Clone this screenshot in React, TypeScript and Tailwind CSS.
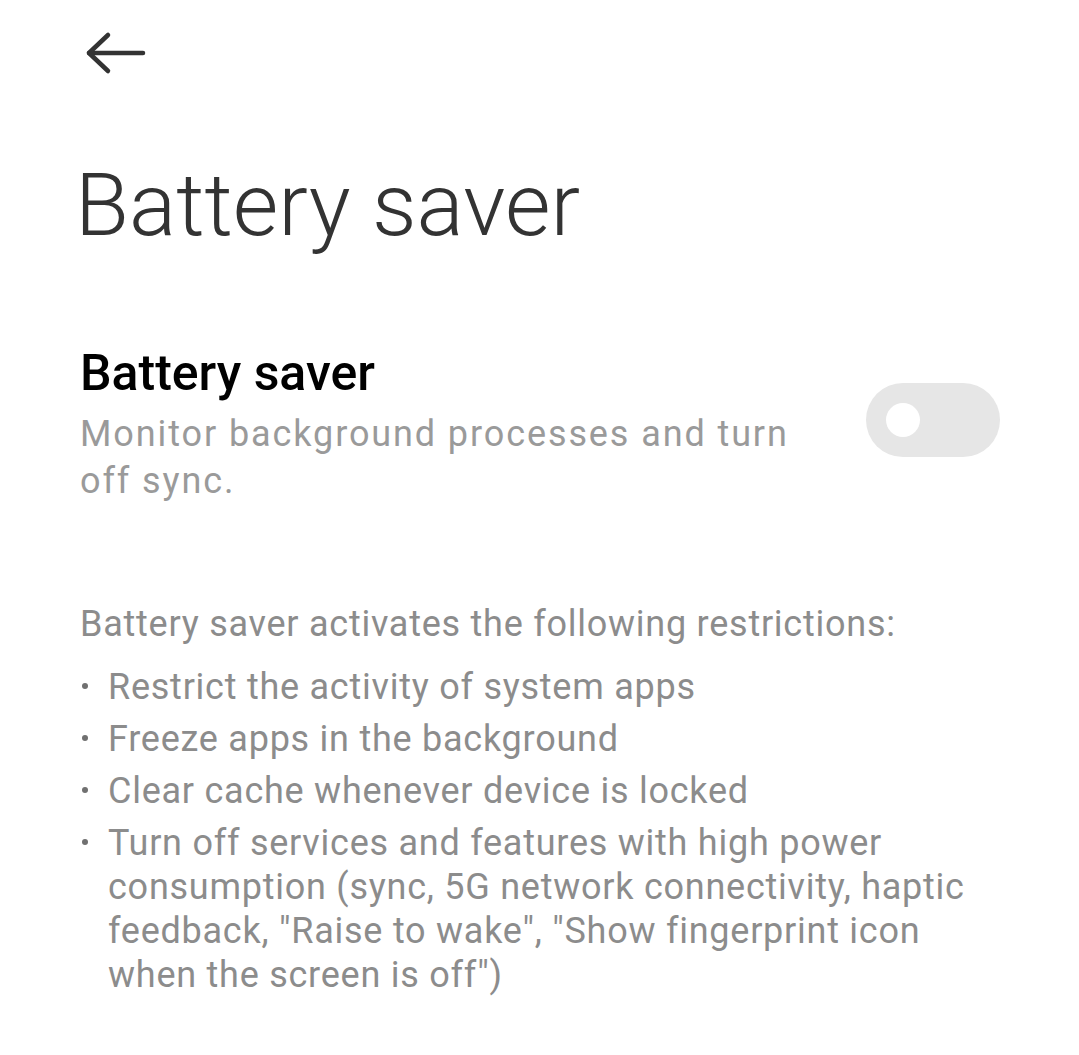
const bullets = [
  'Restrict the activity of system apps',
  'Freeze apps in the background',
  'Clear cache whenever device is locked',
  'Turn off services and features with high power consumption (sync, 5G network connectivity, haptic feedback, "Raise to wake", "Show fingerprint icon when the screen is off")',
];

function BackArrow() {
  return (
    <svg width="70" height="70" viewBox="0 0 70 70" fill="none" stroke="#333" strokeWidth="4.5" strokeLinecap="round" strokeLinejoin="round">
      <path d="M9 33H63" />
      <path d="M28 15L9 33L28 51" />
    </svg>
  );
}

function Toggle() {
  return (
    <div className="mt-[38px] flex h-[74px] w-[134px] shrink-0 items-center rounded-full bg-[#e6e6e6] pl-[20px]">
      <div className="h-[34px] w-[34px] rounded-full bg-white" />
    </div>
  );
}

export default function App() {
  return (
    <div className="min-h-[1055px] w-full bg-white font-['Roboto',sans-serif]">
      <div className="pl-[80px] pt-[20px]">
        <BackArrow />
      </div>

      <h1 className="mt-[71px] pl-[75px] text-[88px] font-light leading-[88px] text-[#333]">Battery saver</h1>

      <div className="mt-[96px] flex items-start justify-between pl-[80px] pr-[79px]">
        <div className="max-w-[740px]">
          <div className="text-[50px] font-medium leading-[56px] text-black">Battery saver</div>
          <p className="mt-[10px] text-[36px] leading-[47px] tracking-[1.9px] text-[#9a9a9a]">
            Monitor background processes and turn off sync.
          </p>
        </div>
        <Toggle />
      </div>

      <div className="mt-[97px] pl-[80px] pr-[79px] text-[36px] leading-[44px] tracking-[0.75px] text-[#8c8c8c]">
        <p>Battery saver activates the following restrictions:</p>
        <ul className="mt-[19px] flex flex-col gap-[8px]">
          {bullets.map((b) => (
            <li key={b} className="flex">
              <span className="flex h-[44px] w-[28px] shrink-0 items-center pb-[2px] pl-[2px]">
                <span className="h-[6px] w-[6px] rounded-full bg-[#707070]" />
              </span>
              <span>{b}</span>
            </li>
          ))}
        </ul>
      </div>
    </div>
  );
}
